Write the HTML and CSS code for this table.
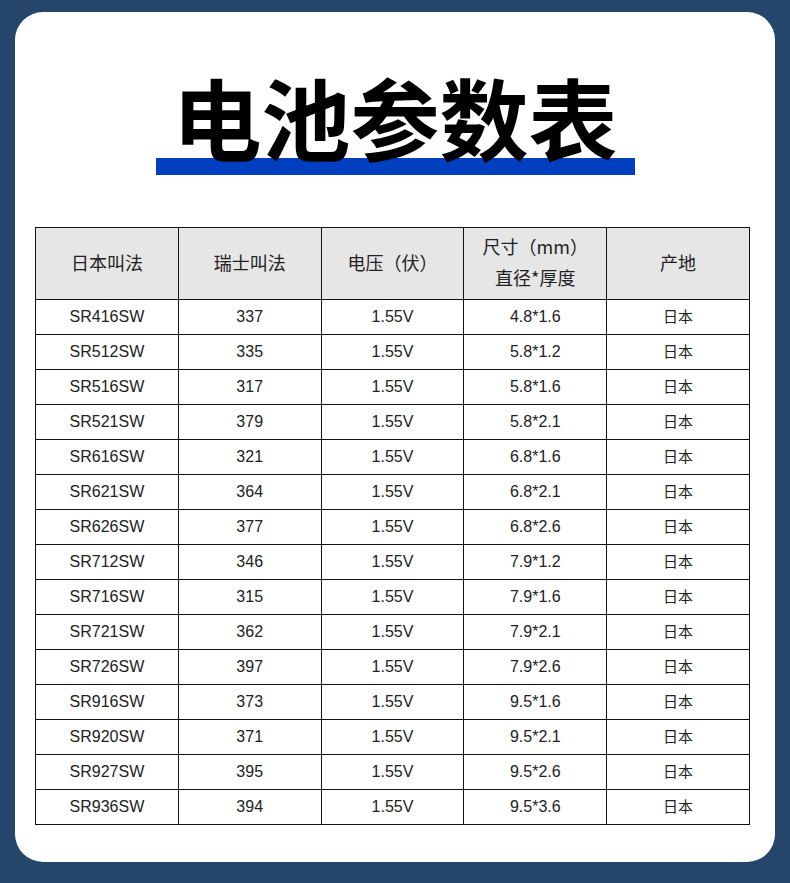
FILE: index.html
```html
<!DOCTYPE html>
<html lang="zh-CN">
<head>
<meta charset="utf-8">
<title>电池参数表</title>
<link rel="stylesheet" href="styles.css">
</head>
<body>
<div class="card">
  <div class="title-wrap"><h1 class="title">电池参数表</h1></div>
  <table class="spec">
    <thead>
      <tr>
        <th>日本叫法</th>
        <th>瑞士叫法</th>
        <th>电压（伏）</th>
        <th>尺寸（mm）<br>直径*厚度</th>
        <th>产地</th>
      </tr>
    </thead>
    <tbody>
      <tr><td>SR416SW</td><td>337</td><td>1.55V</td><td>4.8*1.6</td><td class="cn">日本</td></tr>
      <tr><td>SR512SW</td><td>335</td><td>1.55V</td><td>5.8*1.2</td><td class="cn">日本</td></tr>
      <tr><td>SR516SW</td><td>317</td><td>1.55V</td><td>5.8*1.6</td><td class="cn">日本</td></tr>
      <tr><td>SR521SW</td><td>379</td><td>1.55V</td><td>5.8*2.1</td><td class="cn">日本</td></tr>
      <tr><td>SR616SW</td><td>321</td><td>1.55V</td><td>6.8*1.6</td><td class="cn">日本</td></tr>
      <tr><td>SR621SW</td><td>364</td><td>1.55V</td><td>6.8*2.1</td><td class="cn">日本</td></tr>
      <tr><td>SR626SW</td><td>377</td><td>1.55V</td><td>6.8*2.6</td><td class="cn">日本</td></tr>
      <tr><td>SR712SW</td><td>346</td><td>1.55V</td><td>7.9*1.2</td><td class="cn">日本</td></tr>
      <tr><td>SR716SW</td><td>315</td><td>1.55V</td><td>7.9*1.6</td><td class="cn">日本</td></tr>
      <tr><td>SR721SW</td><td>362</td><td>1.55V</td><td>7.9*2.1</td><td class="cn">日本</td></tr>
      <tr><td>SR726SW</td><td>397</td><td>1.55V</td><td>7.9*2.6</td><td class="cn">日本</td></tr>
      <tr><td>SR916SW</td><td>373</td><td>1.55V</td><td>9.5*1.6</td><td class="cn">日本</td></tr>
      <tr><td>SR920SW</td><td>371</td><td>1.55V</td><td>9.5*2.1</td><td class="cn">日本</td></tr>
      <tr><td>SR927SW</td><td>395</td><td>1.55V</td><td>9.5*2.6</td><td class="cn">日本</td></tr>
      <tr><td>SR936SW</td><td>394</td><td>1.55V</td><td>9.5*3.6</td><td class="cn">日本</td></tr>
    </tbody>
  </table>
</div>
</body>
</html>
```
FILE: styles.css
```css
html, body {
  margin: 0;
  padding: 0;
}
body {
  background: #25466a;
  padding: 12px 15px 0 15px;
  height: 883px;
  box-sizing: border-box;
  font-family: "Liberation Sans", "Noto Sans CJK SC", sans-serif;
}
.card {
  background: #ffffff;
  border-radius: 28px;
  height: 850px;
  box-sizing: border-box;
  padding: 60px 20px 0 20px;
}
.title-wrap {
  display: flex;
  justify-content: center;
}
.title {
  margin: 0;
  display: inline-block;
  padding: 0 17px 16px 17px;
  font-family: "Noto Sans CJK SC", sans-serif;
  font-weight: 700;
  font-size: 89px;
  line-height: 87px;
  height: 87px;
  color: #000;
  background: linear-gradient(#0040c0, #0040c0) no-repeat left bottom / 100% 17px;
}
.spec {
  margin-top: 52px;
  width: 715px;
  border-collapse: collapse;
  table-layout: fixed;
  color: #222;
}
.spec th, .spec td {
  border: 1px solid #111;
  text-align: center;
  padding: 0;
}
.spec th {
  background: #e6e6e6;
  font-weight: normal;
  font-size: 18px;
  height: 68px;
  line-height: 31px;
  padding-bottom: 3px;
  font-family: "Noto Sans CJK SC", sans-serif;
}
.spec td {
  height: 34px;
  font-size: 16px;
}
.spec td.cn {
  font-family: "Noto Sans CJK SC", sans-serif;
  font-size: 15px;
  line-height: 20px;
  height: 32px;
  padding-bottom: 2px;
}
```
